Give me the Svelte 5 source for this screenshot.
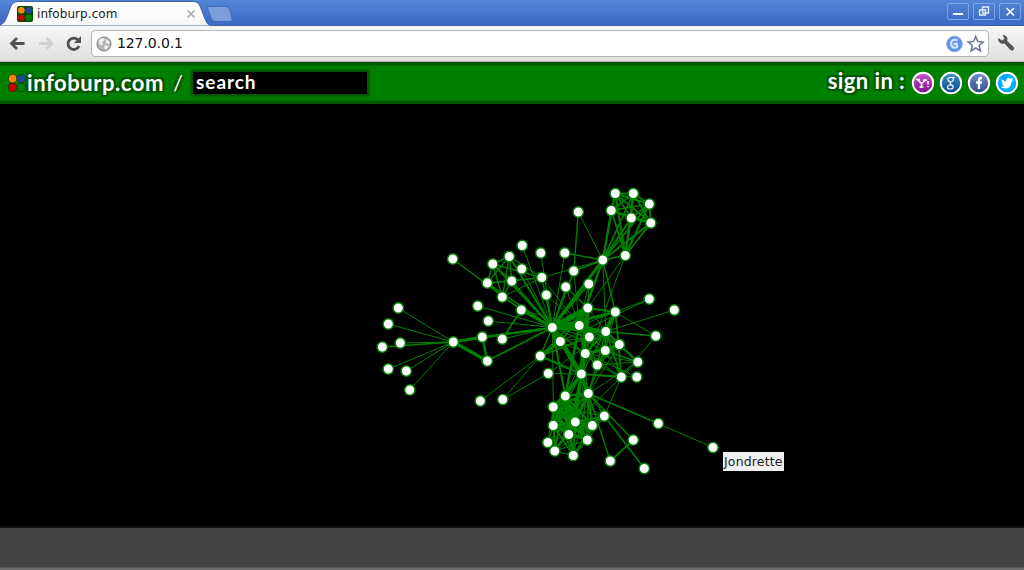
<script>
  const nodes = {
    Myriel: [453, 342], Napoleon: [398, 308], Geborand: [388, 324], Count: [382, 347], OldMan: [400, 343],
    Champtercier: [388, 369], Cravatte: [406, 371], Countess: [409.5, 390], Baptistine: [482, 337], Magloire: [487, 361],
    Valjean: [552, 327.5], Labarre: [477.5, 306], Isabeau: [488, 321], Gervais: [522, 245.5], MmeDeR: [540.5, 253],
    Scaufflaire: [521.5, 269], Woman1: [546, 295], Toussaint: [565.5, 287], Woman2: [588.5, 284],
    Gribier: [452.5, 259], Fauchelevent: [521, 310], Innocent: [502, 339],
    Judge: [492.5, 264], Champmathieu: [509, 256.5], Brevet: [487, 283], Chenildieu: [511.5, 281], Cochepaille: [502, 297], Bamatabois: [541.5, 277.5],
    Marguerite: [564.5, 253], Simplice: [573.5, 271], Perpetue: [578, 212], Fantine: [602.5, 260], Tholomyes: [625, 255.5],
    Listolier: [615, 193.5], Fameuil: [633, 193.5], Blacheville: [649, 204], Favourite: [650.5, 223], Dahlia: [631, 218], Zephine: [611, 210.5],
    Cosette: [587.5, 308], MmeThenardier: [615, 312], Thenardier: [605.5, 331.5], Boulatruelle: [674, 310], Magnon: [649, 299], Anzelma: [655.5, 336],
    Javert: [579, 325.5], LtGillenormand: [589, 337], Gillenormand: [560, 341.5], MlleGillenormand: [540, 356], Vaubois: [480, 401],
    MmePontmercy: [502.5, 399.5], Pontmercy: [548, 373.5], BaronessT: [636.5, 377], Eponine: [621, 377], Brujon: [637.5, 362],
    Babet: [619, 344.5], Gueulemer: [605, 350.5], Montparnasse: [597, 365], Claquesous: [585, 353.5],
    Marius: [581, 374], Enjolras: [565, 396], Gavroche: [588, 393.5], Mabeuf: [604, 416], Plutarch: [644, 468.5],
    Child1: [610, 461], Child2: [633, 440], Burgon: [658, 423.5], Jondrette: [712.7, 447.5],
    Bossuet: [553, 407], Joly: [553, 425.5], Hucheloup: [547.5, 442.5], Grantaire: [554.5, 451], Prouvaire: [573, 455.5],
    Feuilly: [587, 440], Bahorel: [592, 425.5], Courfeyrac: [575, 422], Combeferre: [568.5, 434.5]
  };
  const adjacency = {
    Myriel: 'Napoleon1 Geborand1 Count2 OldMan1 Champtercier1 Cravatte1 Countess1 Baptistine8 Magloire10 Valjean5',
    Baptistine: 'Magloire6 Valjean3',
    Valjean: 'Magloire3 Labarre1 Isabeau1 Gervais1 MmeDeR1 Scaufflaire1 Woman1:2 Toussaint1 Woman2:3 Fauchelevent8 Innocent1 Judge3 Champmathieu3 Brevet2 Chenildieu2 Cochepaille2 Bamatabois2 Marguerite1 Simplice3 Fantine9 Cosette31 MmeThenardier7 Thenardier12 Javert17 Gillenormand2 MlleGillenormand2 Babet1 Gueulemer1 Montparnasse1 Claquesous1 Marius19 Enjolras4 Bossuet1 Gavroche1',
    Fauchelevent: 'Gribier2 Innocent3 Javert1',
    Judge: 'Champmathieu3 Brevet2 Chenildieu2 Cochepaille2 Bamatabois2',
    Champmathieu: 'Brevet2 Chenildieu2 Cochepaille2 Bamatabois2',
    Brevet: 'Chenildieu2 Cochepaille2 Bamatabois1',
    Chenildieu: 'Cochepaille2 Bamatabois1',
    Bamatabois: 'Cochepaille1 Fantine1 Javert1',
    Fantine: 'Marguerite2 Simplice2 Perpetue1 Tholomyes3 Listolier3 Fameuil3 Blacheville3 Favourite4 Dahlia4 Zephine4 MmeThenardier2 Thenardier1 Javert5',
    Simplice: 'Perpetue2 Javert1',
    Tholomyes: 'Listolier4 Fameuil4 Blacheville4 Favourite3 Dahlia3 Zephine3 Cosette1 Marius1',
    Listolier: 'Fameuil4 Blacheville4 Favourite3 Dahlia3 Zephine3',
    Fameuil: 'Blacheville4 Favourite3 Dahlia3 Zephine3',
    Blacheville: 'Favourite4 Dahlia3 Zephine3',
    Favourite: 'Dahlia5 Zephine4', Dahlia: 'Zephine4',
    Javert: 'Woman1:1 Woman2:1 Toussaint1 Cosette1 MmeThenardier1 Thenardier5 Babet2 Gueulemer1 Montparnasse1 Claquesous1 Enjolras6 Gavroche1',
    Cosette: 'Woman2:1 Toussaint2 MmeThenardier4 Thenardier1 Gillenormand3 MlleGillenormand2 LtGillenormand1 Marius21',
    MmeThenardier: 'Thenardier13 Magnon1 Anzelma1 Eponine2 Babet1 Gueulemer1 Claquesous1',
    Thenardier: 'Boulatruelle1 Anzelma2 Eponine3 Babet6 Gueulemer5 Claquesous4 Montparnasse1 Brujon3 Pontmercy1 Marius2 Gavroche1',
    Gillenormand: 'Magnon1 MlleGillenormand9 Marius12 LtGillenormand1 BaronessT1',
    MlleGillenormand: 'Vaubois1 MmePontmercy1 LtGillenormand2 Marius6',
    Pontmercy: 'MmePontmercy1 Marius1',
    Marius: 'LtGillenormand1 BaronessT1 Eponine5 Enjolras7 Gavroche4 Mabeuf1 Combeferre5 Feuilly1 Courfeyrac9 Bossuet5 Joly2 Bahorel1',
    Eponine: 'Anzelma1 Mabeuf1 Courfeyrac1 Babet1 Gueulemer1 Claquesous1 Montparnasse1 Brujon1',
    Babet: 'Gueulemer6 Claquesous4 Montparnasse2 Brujon3 Gavroche1',
    Gueulemer: 'Claquesous4 Montparnasse2 Brujon3 Gavroche1',
    Claquesous: 'Montparnasse2 Brujon1 Enjolras1',
    Brujon: 'Montparnasse1 Gavroche1',
    Montparnasse: 'Gavroche1',
    Gavroche: 'Burgon2 Child1:2 Child2:2 Mabeuf1 Enjolras7 Combeferre6 Prouvaire1 Feuilly2 Courfeyrac7 Bahorel5 Bossuet5 Joly3 Grantaire1 Hucheloup1',
    Burgon: 'Jondrette1', Child1: 'Child2:3',
    Mabeuf: 'Plutarch3 Enjolras1 Combeferre2 Feuilly1 Courfeyrac2 Bahorel2 Bossuet1 Joly1',
    Enjolras: 'Combeferre15 Prouvaire4 Feuilly6 Courfeyrac17 Bahorel4 Bossuet10 Joly5 Grantaire3 Hucheloup1',
    Combeferre: 'Prouvaire2 Feuilly5 Courfeyrac13 Bahorel5 Bossuet9 Joly5 Grantaire1',
    Prouvaire: 'Feuilly2 Courfeyrac3 Bahorel2 Bossuet2 Joly2 Grantaire1',
    Feuilly: 'Courfeyrac6 Bahorel3 Bossuet6 Joly5 Grantaire1',
    Courfeyrac: 'Bahorel6 Bossuet12 Joly5 Grantaire2 Hucheloup1',
    Bahorel: 'Bossuet4 Joly5 Grantaire1 Hucheloup1',
    Bossuet: 'Joly7 Grantaire3 Hucheloup1',
    Joly: 'Grantaire2 Hucheloup1', Grantaire: 'Hucheloup1'
  };
  const links = Object.entries(adjacency).flatMap(([source, list]) =>
    list.split(' ').map((item) => {
      const [, target, weight] = item.includes(':') ? ['', ...item.split(':')] : item.match(/^(\D+)(\d+)$/);
      return { a: nodes[source], b: nodes[target], width: Math.sqrt(+weight) };
    })
  );
</script>

{#snippet dots(r)}
  <circle cx="4.3" cy="4.3" r={r} fill="#ff8800" />
  <circle cx="11.7" cy="4.3" r={r} fill="#1d4795" />
  <circle cx="4.3" cy="11.7" r={r} fill="#c90000" />
  <circle cx="11.7" cy="11.7" r={r} fill="#087c08" />
{/snippet}

<div class="window">
  <div class="titlebar">
    <svg class="tabs" width="240" height="26" viewBox="0 0 240 26">
      <defs><linearGradient id="tab" x2="0" y2="1"><stop stop-color="#fff" /><stop offset="1" stop-color="#f7f7f7" /></linearGradient></defs>
      <path d="M0 26V25Q4 24 6 19L11 6Q13 1.5 17 1.5H194Q198 1.5 200 6L205 19Q207 25 211 26Z" fill="url(#tab)" stroke="#3c62a8" />
      <path d="M209 6.5H225Q229 6.5 230 10L232 18Q233 21.500 229 21.500H216Q212 21.500 211 18L208 9Q207 6.500 209 6.500Z" fill="#7b9ddb" stroke="#416bb7" />
      <g transform="translate(17 6)"><rect width="16" height="16" rx="2" fill="#004d00" />{@render dots(3.3)}</g>
      <path d="M187.500 10.500l7 7m0-7-7 7" stroke="#aaa" stroke-width="1.500" />
    </svg>
    <span class="tabname">infoburp.com</span>
    <div class="controls">
      <span><svg viewBox="0 0 20 14"><path d="M5 9.500H15" stroke="#fff" stroke-width="2" /></svg></span>
      <span><svg viewBox="0 0 20 14"><path d="M8.500 2.500h6v6h-6zM5.500 5.500h6v5h-6z" fill="none" stroke="#e5ecfa" stroke-width="1.300" /></svg></span>
      <span><svg viewBox="0 0 20 14"><path d="M6.500 3.500l7.500 7.500m0-7.500-7.500 7.500" stroke="#fff" stroke-width="1.600" /></svg></span>
    </div>
  </div>

  <div class="toolbar">
    <svg class="nav" width="92" height="36" viewBox="0 0 92 36">
      <path d="M24.500 17.500H12M17 12l-5.500 5.500L17 23" fill="none" stroke="#505050" stroke-width="2.800" />
      <path d="M39 17.500H51M46.500 12l5.500 5.500-5.500 5.500" fill="none" stroke="#d0d0d0" stroke-width="2.800" />
      <path d="M78 14A5.700 5.700 0 1 0 79 20" fill="none" stroke="#505050" stroke-width="2.800" />
      <path d="M81 10v7h-7z" fill="#505050" />
    </svg>
    <div class="address">
      <svg width="16" height="16" viewBox="0 0 16 16">
        <circle cx="8" cy="8" r="7" fill="#b5b5b5" stroke="#777" />
        <path d="M2.500 5Q4 1.500 8 2L9 4 6 6 7 9 4 9 3 7ZM10 3L14 6 13 8 10 7ZM9 9L13 10 10 14 8 12Z" fill="#eee" />
      </svg>
      <span>127.0.0.1</span>
      <svg class="actions" width="39" height="20" viewBox="0 0 39 20">
        <circle cx="8.500" cy="10" r="7.800" fill="#5b8fea" stroke="#8bb0f5" />
        <path d="M11.500 6.500Q8 4.500 5.500 7.500Q4 11 6.500 13Q9 14.500 11 13V9.800H7.500" fill="none" stroke="#d4e2ff" stroke-width="2.200" />
        <path d="M29.700 2.500l2.100 5.100 5.400.4-4.100 3.500 1.300 5.400-4.700-2.900-4.700 2.900 1.300-5.400L22.200 8l5.400-.4Z" fill="#fff" stroke="#6b7890" stroke-width="1.500" />
      </svg>
    </div>
    <svg class="wrench" width="35" height="36" viewBox="0 0 35 36">
      <path d="M10 16Q8.500 14 9.500 12l3.500 2.500 2.500-2-2-3.500Q18 9 18.500 13l-.3 2 6.500 6q1 1.500-.2 3-1.500 1-3 0L15.500 17.500Q12 18.500 10 16Z" fill="#555" />
    </svg>
  </div>

  <header>
    <svg class="logo" width="20" height="20" viewBox="-.5 -.5 17 17"><g stroke="#063c06" stroke-width=".7">{@render dots(3.7)}</g></svg>
    <span class="brand">infoburp.com</span>
    <span class="slash">/</span>
    <div class="search">search</div>
    <span class="signin">sign in :</span>
    <div class="accounts">
      <svg viewBox="0 0 24 24"><defs><linearGradient id="violet" x2="0" y2="1"><stop stop-color="#c45bc8" /><stop offset="1" stop-color="#850d8c" /></linearGradient></defs><circle cx="12" cy="12" r="10.200" fill="url(#violet)" stroke="#fff" stroke-width="1.900" /><path d="M5 8.500h4M6.500 8.500l4 4L14 9.500M12 9h4M10.500 12v4M8.500 16h4M17 10v3.500M17 15v1.300" fill="none" stroke="#fff" stroke-width="1.500" /></svg>
      <svg viewBox="0 0 24 24"><defs><linearGradient id="azure" x2="0" y2="1"><stop stop-color="#3d93cc" /><stop offset="1" stop-color="#07468c" /></linearGradient></defs><circle cx="12" cy="12" r="10.200" fill="url(#azure)" stroke="#fff" stroke-width="1.900" /><path d="M15.500 6.500h-4Q8.500 6.500 9 9q1 2.500 4 1.500Q15.500 9 13.500 6.500M12 11.500l-1 1.500 3 2q1 3-2.500 3T8.500 16q.2-2 3.500-2" fill="none" stroke="#fff" stroke-width="1.200" /></svg>
      <svg viewBox="0 0 24 24"><defs><linearGradient id="navy" x2="0" y2="1"><stop stop-color="#7690c8" /><stop offset="1" stop-color="#304c91" /></linearGradient></defs><circle cx="12" cy="12" r="10.200" fill="url(#navy)" stroke="#fff" stroke-width="1.900" /><path d="M15 7h-1q-2 0-2 2.500V18M9 11.500h6" fill="none" stroke="#fff" stroke-width="2.300" /></svg>
      <svg viewBox="0 0 24 24"><circle cx="12" cy="12" r="10.200" fill="#00adff" stroke="#fff" stroke-width="1.900" /><path d="M6 8l5 2.700Q11 7 14 7l2 .8 2.500-.8L17 9.500l1.500-.2-2 2Q16 17 11 17.500q-3 0-5-1.500l3-.8-2.500-2h1.800L6 11l1.500.2Z" fill="#fff" /></svg>
    </div>
  </header>

  <main>
    <svg width="1024" height="422" viewBox="0 104 1024 422">
      <g transform="translate(.3 0)">
        <g class="links">{#each links as l}<line x1={l.a[0]} y1={l.a[1]} x2={l.b[0]} y2={l.b[1]} stroke-width={l.width} />{/each}</g>
        <g class="nodes">{#each Object.values(nodes) as [x, y]}<circle cx={x} cy={y} r="5.200" />{/each}</g>
      </g>
    </svg>
    <div class="tooltip">Jondrette</div>
  </main>
  <footer></footer>
</div>

<style>
  :global(body) { background: #000; overflow: hidden; }
  .window { width: 1024px; height: 570px; display: flex; flex-direction: column; font-family: "DejaVu Sans", sans-serif; overflow: hidden; }
  .titlebar { height: 26px; flex: none; display: flex; background: linear-gradient(#5585d6, #3f6dc6 80%, #3f6dc6); box-shadow: inset 0 -1px #395f9f; }
  .tabs { flex: none; }
  .tabname { margin-left: -203px; width: 203px; padding-top: 6px; font-size: 12px; line-height: 16px; letter-spacing: .06px; color: #222; z-index: 1; }
  .controls { margin: 3px 3px 0 auto; display: flex; gap: 4px; }
  .controls span { box-sizing: border-box; width: 22px; height: 17px; border: 1px solid #7fa2e0; border-radius: 2px; display: flex; }
  .controls svg { width: 20px; height: 15px; }
  .toolbar { height: 36px; flex: none; box-sizing: border-box; display: flex; background: linear-gradient(#f7f7f7, #dfdfdf); border-bottom: 1px solid #b5b5b5; }
  .nav, .wrench { flex: none; }
  .address { flex: 1; box-sizing: border-box; height: 27px; margin-top: 4px; border: 1px solid #b6b6b6; border-radius: 4px; background: #fff; display: flex; align-items: center; padding: 0 3px 0 4px; margin-left: -1px; gap: 5px; font-size: 14px; color: #111; }
  .address span { padding-bottom: 2px; letter-spacing: -.1px; }
  .actions { margin-left: auto; }
  header { height: 42px; flex: none; box-sizing: border-box; display: flex; background: #008000; border: solid #005800; border-width: 3px 0; padding-left: 7px; box-shadow: inset 0 1px #006c00, inset 0 -1px #006c00; color: #fff; font-family: Lato, sans-serif; font-weight: 700; }
  .brand, .slash, .signin { text-shadow: 0 0 2px #004800, 2px 2px 1px #005800, -2px -2px 1px #005800, 2px -2px 1px #005800, -2px 2px 1px #005800; line-height: 28px; white-space: nowrap; }
  .logo { flex: none; margin-top: 8px; }
  .brand { width: 146px; margin-top: 4px; font-size: 22px; letter-spacing: .55px; }
  .slash { width: 20px; margin-top: 4px; font-size: 22px; font-weight: 400; }
  .search { width: 174px; height: 22px; box-sizing: border-box; margin-top: 7px; padding-left: 3px; background: #000; box-shadow: 0 0 0 2px #005800, 0 0 2px 3px #006700; font-size: 19px; line-height: 20px; letter-spacing: .95px; }
  .signin { margin: 2px 6px 0 auto; font-size: 22px; letter-spacing: .4px; }
  .accounts { display: flex; gap: 4px; margin: 5.500px 5px 0 0; }
  .accounts svg { width: 24px; height: 24px; }
  main { height: 422px; flex: none; background: #000; position: relative; }
  main svg { display: block; }
  .links line { stroke: #008000; }
  .nodes circle { fill: #fff; stroke: #008000; stroke-width: 1.5px; }
  .tooltip { position: absolute; left: 723px; top: 348px; width: 61px; height: 19px; box-sizing: border-box; padding-left: 1px; background: #efefef; color: #222; font-size: 12.500px; letter-spacing: .15px; line-height: 20px; white-space: nowrap; }
  footer { height: 44px; flex: none; box-sizing: border-box; background: #444; border-top: 2px solid #111; border-bottom: 2px solid #6d6d6d; box-shadow: inset 0 -1px #555; }
</style>
